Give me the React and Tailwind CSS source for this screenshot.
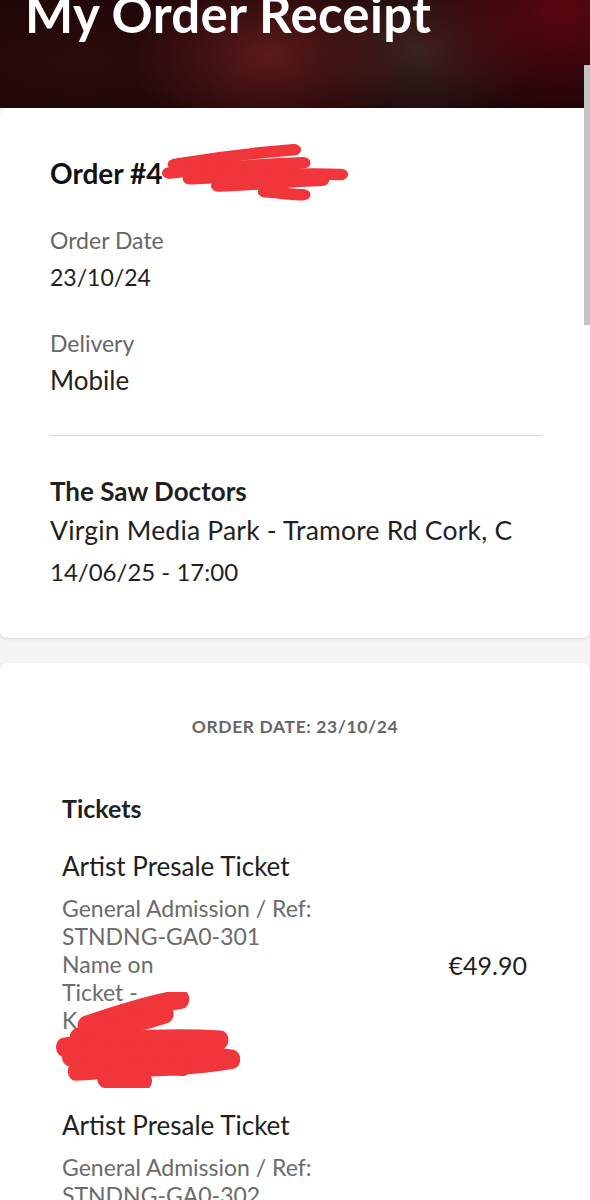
import React from 'react'

const font = { fontFamily: 'Lato, "Noto Sans", sans-serif' }

// red marker scribble used to hide personal data
const Scribble = ({ className, paths }) => (
  <svg className={className} viewBox="0 0 200 80" preserveAspectRatio="none" aria-hidden="true">
    {paths.map((d, i) => (
      <path key={i} d={d} fill="none" stroke="#f0363a" strokeWidth="16" strokeLinecap="round" strokeLinejoin="round" />
    ))}
  </svg>
)

const Line = ({ children, className = '' }) => <div className={`leading-[28px] ${className}`}>{children}</div>

const Ticket = ({ refNo, price, redacted }) => (
  <div className="flex items-start justify-between">
    <div>
      <div className="text-[26px] leading-[30px] text-[#1f1f1f]">Artist Presale Ticket</div>
      <div className="mt-[13px] text-[23px] text-[#6b6b6b]">
        <Line>General Admission / Ref:</Line>
        <Line>{refNo}</Line>
        <Line>Name on</Line>
        <Line>Ticket -</Line>
        <div className="relative">
          <Line>K</Line>
          <Line>F</Line>
          {redacted && (
            <Scribble
              className="absolute left-[-6px] top-[-14px] w-[196px] h-[96px]"
              paths={[
                'M30 28 C80 14 110 8 128 6',
                'M22 38 C70 28 100 22 112 18',
                'M8 46 C60 40 120 38 168 40',
                'M14 54 C80 52 150 52 180 56 C140 62 80 64 30 62',
                'M20 66 C70 64 110 60 130 62',
                'M50 72 C70 74 80 74 90 74',
              ]}
            />
          )}
        </div>
      </div>
    </div>
    {price && <div className="mt-[100px] text-[25px] leading-[28px] text-[#1f1f1f] pr-[1px]">{price}</div>}
  </div>
)

export default function App() {
  return (
    <div style={font} className="relative w-[590px] h-[1200px] overflow-hidden bg-[#f4f4f4]">
      <header className="h-[108px] bg-[#1c0507] bg-[radial-gradient(ellipse_140px_90px_at_270px_55px,#5c1a1a_0%,transparent_100%),radial-gradient(ellipse_160px_110px_at_560px_10px,#5a0710_0%,transparent_100%),radial-gradient(ellipse_120px_80px_at_420px_50px,#3a2420_0%,transparent_100%),radial-gradient(ellipse_200px_80px_at_80px_60px,#2c0c0c_0%,transparent_100%)] px-[25px]">
        <h1 className="text-[51px] font-bold leading-none text-white tracking-[0.3px] translate-y-[-12px] whitespace-nowrap">My Order Receipt</h1>
      </header>

      <section className="rounded-[7px] bg-white shadow-[0_1px_3px_rgba(0,0,0,0.12)] px-[50px] pt-[50px] pb-[51px]">
        <div className="relative text-[28px] font-bold leading-[30px] text-[#111]">
          Order #4
          <Scribble
            className="absolute left-[112px] top-[-14px] w-[188px] h-[58px]"
            paths={[
              'M14 28 C60 18 100 12 140 8',
              'M8 40 C60 32 110 28 150 26',
              'M30 48 C90 44 140 40 190 42',
              'M60 58 C100 56 130 52 170 50',
              'M110 66 C130 68 140 70 150 70',
            ]}
          />
        </div>
        <div className="mt-[38px] text-[23px] leading-[28px] text-[#666]">Order Date</div>
        <div className="mt-[8px] text-[23px] leading-[30px] text-[#1f1f1f]">23/10/24</div>
        <div className="mt-[37px] text-[23px] leading-[28px] text-[#666]">Delivery</div>
        <div className="mt-[8px] text-[26px] leading-[30px] text-[#1f1f1f]">Mobile</div>
        <div className="mt-[40px] mr-[-2px] h-px bg-[#d6d6d6]" />
        <div className="mt-[40px] text-[26px] font-bold leading-[30px] text-[#1f1f1f]">The Saw Doctors</div>
        <div className="mt-[9px] text-[26.5px] tracking-[0.2px] leading-[30px] text-[#1f1f1f] whitespace-nowrap">Virgin Media Park - Tramore Rd Cork, C</div>
        <div className="mt-[12px] text-[24px] leading-[30px] text-[#1f1f1f]">14/06/25 - 17:00</div>
      </section>

      <section className="mt-[25px] rounded-[7px] bg-white shadow-[0_1px_3px_rgba(0,0,0,0.10)] pl-[62px] pr-[62px] pt-[50px] pb-[40px]">
        <div className="text-center text-[17.5px] font-bold uppercase tracking-[0.6px] text-[#666] leading-[28px]">Order Date: 23/10/24</div>
        <div className="mt-[53px] text-[25px] font-bold leading-[28px] text-[#1f1f1f]">Tickets</div>
        <div className="mt-[29px] flex flex-col gap-[48px]">
          <Ticket refNo="STNDNG-GA0-301" price="€49.90" redacted />
          <Ticket refNo="STNDNG-GA0-302" />
        </div>
      </section>

      <div className="absolute right-0 top-[65px] h-[260px] w-[6px] bg-[#c4c4c4]" />
    </div>
  )
}
